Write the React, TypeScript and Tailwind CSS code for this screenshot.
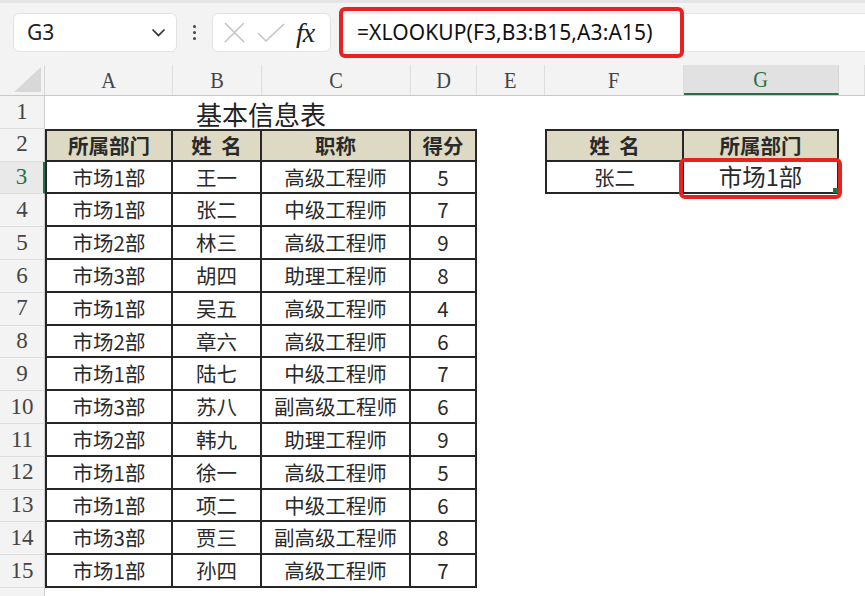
import React from 'react';

const cols = [
  { key: 'A', w: 'w-[128px]' },
  { key: 'B', w: 'w-[89px]' },
  { key: 'C', w: 'w-[149px]' },
  { key: 'D', w: 'w-[66px]' },
  { key: 'E', w: 'w-[68px]' },
  { key: 'F', w: 'w-[139px]' },
  { key: 'G', w: 'w-[155px]' },
  { key: 'H', w: 'w-[26px]' },
];

const rows: [string, string, string, string][] = [
  ['市场1部', '王一', '高级工程师', '5'],
  ['市场1部', '张二', '中级工程师', '7'],
  ['市场2部', '林三', '高级工程师', '9'],
  ['市场3部', '胡四', '助理工程师', '8'],
  ['市场1部', '吴五', '高级工程师', '4'],
  ['市场2部', '章六', '高级工程师', '6'],
  ['市场1部', '陆七', '中级工程师', '7'],
  ['市场3部', '苏八', '副高级工程师', '6'],
  ['市场2部', '韩九', '助理工程师', '9'],
  ['市场1部', '徐一', '高级工程师', '5'],
  ['市场1部', '项二', '中级工程师', '6'],
  ['市场3部', '贾三', '副高级工程师', '8'],
  ['市场1部', '孙四', '高级工程师', '7'],
];

const cjk = "font-['Noto_Sans_CJK_SC',sans-serif]";
const serif = "font-['Liberation_Serif','DejaVu_Serif',serif]";

function RowHead({ n, active }: { n: number; active?: boolean }) {
  return (
    <div
      className={
        'w-[45px] shrink-0 flex items-center justify-center border-b border-[#dcdcdc] text-[23px] ' +
        serif +
        (active
          ? ' bg-[#e9e9e9] text-[#217346] border-r-2 border-r-[#217346]'
          : ' bg-[#f3f3f3] text-[#444] border-r border-r-[#cfcfcf]')
      }
    >
      {n}
    </div>
  );
}

function Cell({
  w,
  children,
  cls = '',
}: {
  w: string;
  children?: React.ReactNode;
  cls?: string;
}) {
  return (
    <div className={`${w} shrink-0 flex items-center justify-center text-[20.5px] text-[#2a2a2a] ${cjk} ${cls}`}>
      {children}
    </div>
  );
}

const bd = 'border-[#262626]';

export default function App() {
  return (
    <div className="w-[865px] h-[596px] overflow-hidden bg-white flex flex-col select-none">
      {/* formula toolbar */}
      <div className="h-[65px] shrink-0 bg-[#f3f3f3] border-t-[3px] border-[#e4e4e4] relative">
        <div className="flex items-start pt-[10px]">
          <div className="ml-[13px] w-[164px] h-[39px] bg-white rounded-[6px] border border-[#e2e2e2] flex items-center justify-between pl-[13px] pr-[10px]">
            <span className="text-[21px] text-[#222] font-['Noto_Sans',sans-serif]">G3</span>
            <svg width="15" height="9" viewBox="0 0 15 9" fill="none" stroke="#333" strokeWidth="1.7">
              <path d="M1.5 1.5 L7.5 7.5 L13.5 1.5" />
            </svg>
          </div>
          <div className="w-[35px] h-[39px] flex flex-col items-center justify-center gap-[3px]">
            <span className="w-[3px] h-[3px] rounded-full bg-[#444]" />
            <span className="w-[3px] h-[3px] rounded-full bg-[#444]" />
            <span className="w-[3px] h-[3px] rounded-full bg-[#444]" />
          </div>
          <div className="w-[119px] h-[39px] bg-white rounded-[6px] border border-[#e2e2e2] flex items-center pl-[10px] gap-[11px]">
            <svg width="23" height="23" viewBox="0 0 23 23" stroke="#c4c4c4" strokeWidth="1.6" fill="none">
              <path d="M2 2 L21 21 M21 2 L2 21" />
            </svg>
            <svg width="28" height="21" viewBox="0 0 28 21" stroke="#c4c4c4" strokeWidth="1.6" fill="none">
              <path d="M1 11 L9 19 L27 2" />
            </svg>
            <span className="text-[28px] leading-none italic text-[#222] font-['Liberation_Serif',serif] tracking-[-1px]">fx</span>
          </div>
          <div className="ml-[8px] flex-1 h-[39px] bg-white flex items-center pl-[18px] border-y border-[#e6e6e6]">
            <span className="text-[21px] text-[#111] font-['Noto_Sans',sans-serif] tracking-[0.1px]">
              =XLOOKUP(F3,B3:B15,A3:A15)
            </span>
          </div>
        </div>
        <div className="absolute left-[339px] top-[4px] w-[345px] h-[51px] border-4 border-[#e8231f] rounded-[6px]" />
      </div>

      {/* column headers */}
      <div className="h-[31px] shrink-0 flex bg-[#f3f3f3] border-b border-[#c9c9c9]">
        <div className="w-[45px] shrink-0 relative border-r border-[#d6d6d6]">
          <svg className="absolute right-[3px] bottom-[3px]" width="27" height="25" viewBox="0 0 27 25">
            <path d="M27 0 L27 25 L0 25 Z" fill="#d8d8d8" />
          </svg>
        </div>
        {cols.map((c) => (
          <div
            key={c.key}
            className={
              `${c.w} shrink-0 flex items-center justify-center text-[24px] ${serif} ` +
              (c.key === 'G'
                ? 'bg-[#e1e1e1] text-[#217346] border-b-2 border-[#217346] border-r border-r-[#d6d6d6]'
                : 'text-[#444] border-r border-[#dedede]')
            }
          >
            <span className="inline-block scale-x-[0.85]">{c.key === 'H' ? '' : c.key}</span>
          </div>
        ))}
      </div>

      {/* rows */}
      <div className="flex flex-col">
        {/* row 1 */}
        <div className="h-[32.8px] flex">
          <RowHead n={1} />
          <div className={`w-[432px] shrink-0 flex items-end justify-center text-[26px] text-[#222] leading-none pb-[2px] ${cjk}`}>
            基本信息表
          </div>
        </div>
        {/* row 2 */}
        <div className="h-[32.8px] flex">
          <RowHead n={2} />
          <Cell w="w-[128px]" cls={`bg-[#ddd9c3] font-bold border-2 ${bd}`}>所属部门</Cell>
          <Cell w="w-[89px]" cls={`bg-[#ddd9c3] font-bold border-y-2 border-r-2 ${bd}`}>姓&nbsp;&nbsp;名</Cell>
          <Cell w="w-[149px]" cls={`bg-[#ddd9c3] font-bold border-y-2 border-r-2 ${bd}`}>职称</Cell>
          <Cell w="w-[66px]" cls={`bg-[#ddd9c3] font-bold border-y-2 border-r-2 ${bd}`}>得分</Cell>
          <Cell w="w-[68px]" />
          <Cell w="w-[139px]" cls={`bg-[#ddd9c3] font-bold border-2 ${bd}`}>姓&nbsp;&nbsp;名</Cell>
          <Cell w="w-[155px]" cls={`bg-[#ddd9c3] font-bold border-y-2 border-r-2 ${bd}`}>所属部门</Cell>
        </div>
        {rows.map((r, i) => {
          const n = i + 3;
          return (
            <div key={n} className="h-[32.8px] flex">
              <RowHead n={n} active={n === 3} />
              <Cell w="w-[128px]" cls={`border-x-2 border-b-2 ${bd}`}>{r[0]}</Cell>
              <Cell w="w-[89px]" cls={`border-r-2 border-b-2 ${bd}`}>{r[1]}</Cell>
              <Cell w="w-[149px]" cls={`border-r-2 border-b-2 ${bd}`}>{r[2]}</Cell>
              <Cell w="w-[66px]" cls={`border-r-2 border-b-2 ${bd} font-['Noto_Sans',sans-serif]`}>{r[3]}</Cell>
              {n === 3 && (
                <>
                  <Cell w="w-[68px]" />
                  <Cell w="w-[139px]" cls={`border-x-2 border-b-2 ${bd}`}>张二</Cell>
                  <Cell w="w-[155px]" cls={`border-r-2 border-b-2 ${bd} relative !text-[23.5px]`}>
                    市场1部
                    <span className="absolute right-[-1px] bottom-[-1px] w-[5px] h-[5px] bg-[#217346]" />
                    <span className="absolute left-[-5px] top-[-4px] right-[-5px] bottom-[-7px] border-4 border-[#e8231f] rounded-[6px]" />
                  </Cell>
                </>
              )}
            </div>
          );
        })}
        <div className="h-[20px] flex">
          <div className="w-[45px] shrink-0 bg-[#f3f3f3] border-r border-[#cfcfcf]" />
        </div>
      </div>
    </div>
  );
}
